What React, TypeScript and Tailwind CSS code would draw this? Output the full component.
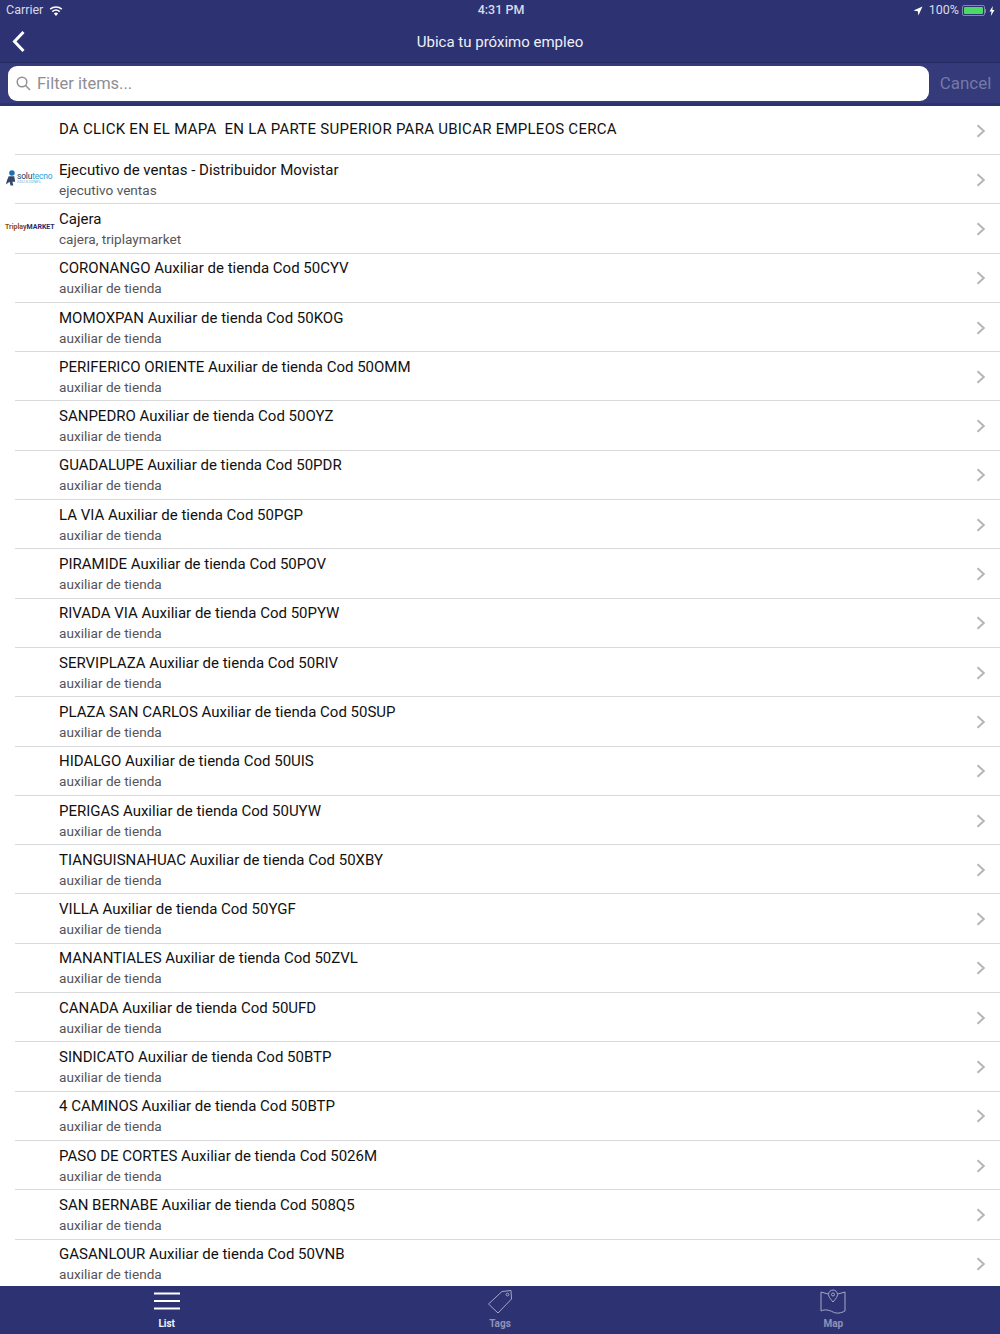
const jobs = [
  ["Ejecutivo de ventas - Distribuidor Movistar", "ejecutivo ventas", "solutecno"],
  ["Cajera", "cajera, triplaymarket", "triplay"],
  ["CORONANGO Auxiliar de tienda Cod 50CYV", "auxiliar de tienda", ""],
  ["MOMOXPAN Auxiliar de tienda Cod 50KOG", "auxiliar de tienda", ""],
  ["PERIFERICO ORIENTE Auxiliar de tienda Cod 50OMM", "auxiliar de tienda", ""],
  ["SANPEDRO Auxiliar de tienda Cod 50OYZ", "auxiliar de tienda", ""],
  ["GUADALUPE Auxiliar de tienda Cod 50PDR", "auxiliar de tienda", ""],
  ["LA VIA Auxiliar de tienda Cod 50PGP", "auxiliar de tienda", ""],
  ["PIRAMIDE Auxiliar de tienda Cod 50POV", "auxiliar de tienda", ""],
  ["RIVADA VIA Auxiliar de tienda Cod 50PYW", "auxiliar de tienda", ""],
  ["SERVIPLAZA Auxiliar de tienda Cod 50RIV", "auxiliar de tienda", ""],
  ["PLAZA SAN CARLOS Auxiliar de tienda Cod 50SUP", "auxiliar de tienda", ""],
  ["HIDALGO Auxiliar de tienda Cod 50UIS", "auxiliar de tienda", ""],
  ["PERIGAS Auxiliar de tienda Cod 50UYW", "auxiliar de tienda", ""],
  ["TIANGUISNAHUAC Auxiliar de tienda Cod 50XBY", "auxiliar de tienda", ""],
  ["VILLA Auxiliar de tienda Cod 50YGF", "auxiliar de tienda", ""],
  ["MANANTIALES Auxiliar de tienda Cod 50ZVL", "auxiliar de tienda", ""],
  ["CANADA Auxiliar de tienda Cod 50UFD", "auxiliar de tienda", ""],
  ["SINDICATO Auxiliar de tienda Cod 50BTP", "auxiliar de tienda", ""],
  ["4 CAMINOS Auxiliar de tienda Cod 50BTP", "auxiliar de tienda", ""],
  ["PASO DE CORTES Auxiliar de tienda Cod 5026M", "auxiliar de tienda", ""],
  ["SAN BERNABE Auxiliar de tienda Cod 508Q5", "auxiliar de tienda", ""],
  ["GASANLOUR Auxiliar de tienda Cod 50VNB", "auxiliar de tienda", ""],
];

const Chevron = () => (
  <svg width="10" height="14" viewBox="0 0 10 14" className="shrink-0 translate-x-[1px]" fill="none" stroke="#b5b5b8" strokeWidth="2">
    <path d="M1.500 1.200 7.800 7 1.500 12.800" />
  </svg>
);

const Logo = ({ kind }: { kind: string }) => {
  if (kind === "solutecno") {
    return (
      <div className="flex items-center w-[50px] ml-[5px] -mt-[3px]">
        <svg width="12" height="18" viewBox="0 0 13 18" className="shrink-0">
          <circle cx="7.500" cy="3.500" r="3" fill="#1f6fb5" />
          <path d="M4 7h6l1 6H8l1 4H6l-1-4-4 3 1-4z" fill="#34466b" />
        </svg>
        <div className="leading-none">
          <div className="text-[8.500px] tracking-[-0.2px] text-[#26375c]">
            solu<span className="text-[#2f9fd0]">tecno</span>
          </div>
          <div className="text-[4px] text-[#67b7d8]">SOLUCIONES</div>
        </div>
      </div>
    );
  }
  return (
    <div className="w-[50px] ml-[5px] -mt-[3px] text-[7px] leading-none font-bold whitespace-nowrap">
      <span className="text-[#8a4a12]">Triplay</span>
      <span className="text-[#2b2b6b]">MARKET</span>
    </div>
  );
};

const Row = ({ title, sub, logo }: { title: string; sub: string; logo: string }) => (
  <div className="relative flex items-center h-[49.3px] pr-[15px]">
    <div className="w-[59px] shrink-0">{logo && <Logo kind={logo} />}</div>
    <div className="flex-1 min-w-0">
      <div className="text-[15px] leading-[20px] text-[#111111]">{title}</div>
      <div className="text-[13.600px] leading-[20px] text-[#555558]">{sub}</div>
    </div>
    <Chevron />
    <div className="absolute left-[15px] right-0 bottom-0 h-px bg-[#d9d9db]" />
  </div>
);

const StatusBar = () => (
  <div className="flex items-center justify-between h-[21px] pl-[6px] pr-[5px] text-[12.500px] text-[#d8dbe9]">
    <div className="flex items-center gap-[6px]">
      <span>Carrier</span>
      <svg width="14" height="10" viewBox="0 0 14 10" fill="#ffffff">
        <path d="M7 10 4.900 7.500a3.200 3.200 0 0 1 4.200 0z" />
        <path d="M3.800 6.200a5 5 0 0 1 6.400 0l1-1.200a6.700 6.700 0 0 0-8.400 0z" />
        <path d="M1.700 3.800a8.200 8.200 0 0 1 10.600 0l1-1.200a9.900 9.900 0 0 0-12.600 0z" />
      </svg>
    </div>
    <div className="absolute left-[2px] right-0 text-center pointer-events-none font-medium">4:31 PM</div>
    <div className="flex items-center">
      <svg width="10" height="10" viewBox="0 0 10 10" fill="#ffffff" className="mr-[6px]">
        <path d="M9.500.500 0.500 4.600l4.300.600.600 4.300z" />
      </svg>
      <span className="mr-[3px]">100%</span>
      <div className="w-[23px] h-[11px] border border-[#7f86b5] rounded-[2px] p-[1px]">
        <div className="h-full rounded-[1px] bg-[#4cd964]" />
      </div>
      <div className="w-[1px] h-[4px] bg-[#7f86b5] mr-[3px]" />
      <svg width="6" height="10" viewBox="0 0 6 10" fill="#ffffff">
        <path d="M3.800 0 0.500 5.600h2L1.800 10l3.700-6H3.400z" />
      </svg>
    </div>
  </div>
);

const App = () => {
  return (
    <div className="relative flex flex-col h-[1334px] w-[1000px] overflow-hidden bg-white font-['Roboto',sans-serif]">
      <div className="bg-[#2d3272]">
        <StatusBar />
        <div className="relative flex items-center justify-center h-[42px] border-b border-[#252a60]">
          <svg width="14" height="24" viewBox="0 0 14 24" className="absolute left-[12px] top-[9px]" fill="none" stroke="#ffffff" strokeWidth="3">
            <path d="M11.500 2 2.500 11.500l9 9.500" />
          </svg>
          <span className="text-[15px] pt-[1px] text-[#eef0f7]">Ubica tu próximo empleo</span>
        </div>
      </div>
      <div className="flex items-center h-[43px] pl-[8px] pt-[1px] bg-[#343a7a] border-b-[3px] border-[#2d3272]">
        <div className="flex items-center flex-1 h-[35px] rounded-[9px] bg-white pl-[8px]">
          <svg width="15" height="15" viewBox="0 0 15 15" fill="none" stroke="#8e8e93" strokeWidth="1.400" className="mr-[6px]">
            <circle cx="6" cy="6" r="4.800" />
            <path d="M9.600 9.600 14 14" />
          </svg>
          <span className="text-[16.500px] pt-[1px] text-[#8e8e93]">Filter items...</span>
        </div>
        <span className="w-[71px] pl-[2px] pt-[1px] text-center text-[17px] text-[#7479a6]">Cancel</span>
      </div>

      <div className="flex-1 overflow-hidden">
        <div className="relative flex items-center h-[49px] pr-[15px]">
          <div className="flex-1 pl-[59px] pb-[3px] text-[15px] tracking-[0.26px] text-[#111111] whitespace-pre">DA CLICK EN EL MAPA  EN LA PARTE SUPERIOR PARA UBICAR EMPLEOS CERCA</div>
          <Chevron />
          <div className="absolute left-[15px] right-0 bottom-0 h-px bg-[#d9d9db]" />
        </div>
        {jobs.map((job) => (
          <Row key={job[0]} title={job[0]} sub={job[1]} logo={job[2]} />
        ))}
      </div>

      {/* Tab bar */}
      <div className="grid grid-cols-3 h-[48px] shrink-0 bg-[#2d3272] text-[10px] font-bold">
        <div className="flex flex-col items-center pt-[5px] text-[#f2f3f8]">
          <svg width="26" height="20" viewBox="0 0 26 20" stroke="#ffffff" strokeWidth="2">
            <path d="M0 2.500h26M0 10h26M0 17.500h26" />
          </svg>
          <span className="mt-[5px]">List</span>
        </div>
        <div className="flex flex-col items-center pt-[3px] text-[#8f93b8]">
          <svg width="26" height="26" viewBox="0 0 26 26" fill="none" stroke="#a5a8c6" strokeWidth="1">
            <path d="M15 2.500 24 1.500 24.500 10 11 24 1.500 15z" />
            <circle cx="20.500" cy="5.500" r="1.400" />
          </svg>
          <span className="mt-[1px]">Tags</span>
        </div>
        <div className="flex flex-col items-center pt-[3px] text-[#8f93b8]">
          <svg width="26" height="26" viewBox="0 0 26 26" fill="none" stroke="#a5a8c6" strokeWidth="1">
            <path d="M8 5 1 3v19c4-2 8-1 12 1s8 1 12-1V3l-7 2" />
            <path d="M13 13C10 9.500 8.500 7.500 8.500 5.500a4.500 4.500 0 0 1 9 0c0 2-1.500 4-4.500 7.500z" />
            <circle cx="13" cy="5.500" r="1.500" />
          </svg>
          <span className="mt-[1px]">Map</span>
        </div>
      </div>
    </div>
  );
};

export default App;
